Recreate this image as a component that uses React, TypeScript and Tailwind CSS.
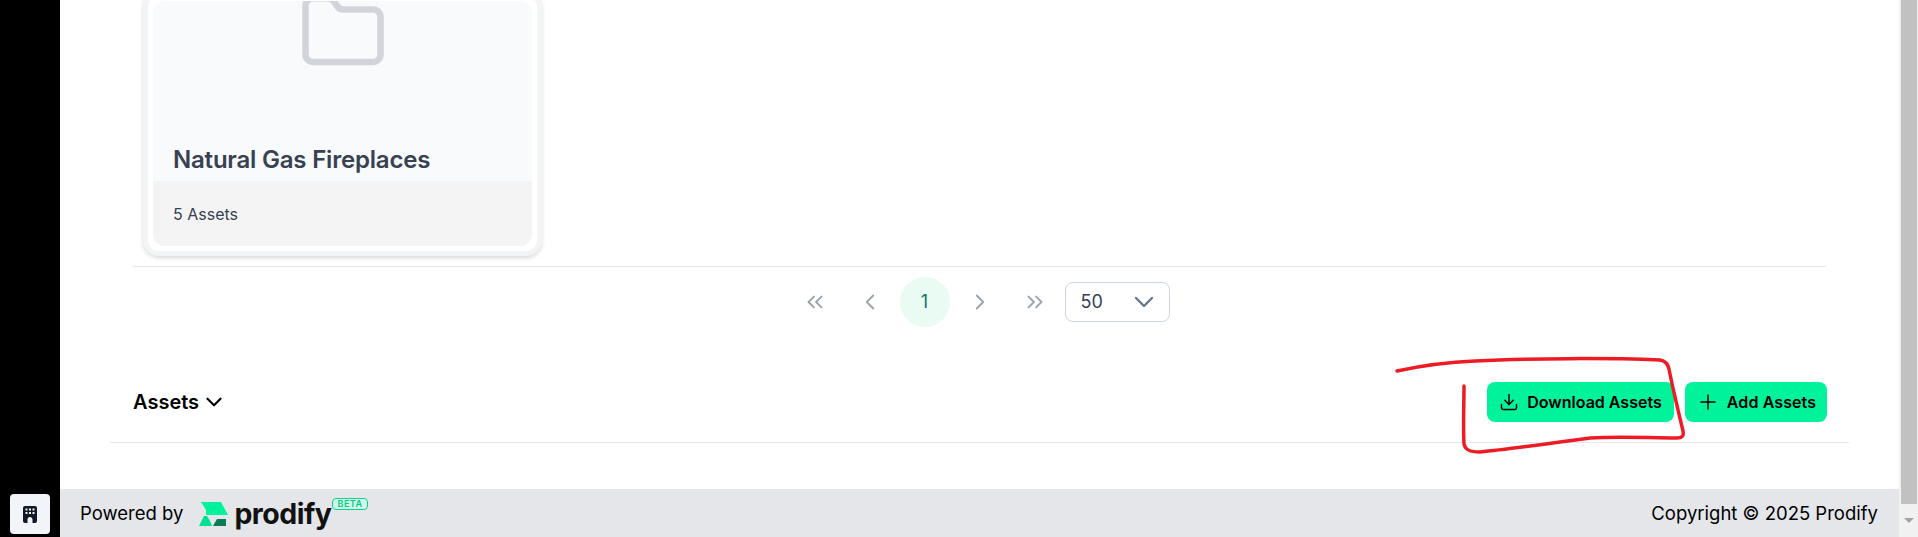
import { ChevronDown, ChevronLeft, ChevronRight, ChevronsLeft, ChevronsRight, Download, Folder, Plus } from "lucide-react";

function PageIcon({ children }: { children: React.ReactNode }) {
  return <div className="flex h-[50px] w-[50px] items-center justify-center text-[#9ca3af]">{children}</div>;
}

function Logo() {
  return (
    <svg width="29" height="24" viewBox="0 0 29 24" className="shrink-0">
      <path d="M2 0H22L29 13H7V8Z" fill="#00f29b" />
      <path d="M5 14H8L11 19L13 24H0Z" fill="#00e093" />
      <path d="M14 24L18 17H27V24Z" fill="#0b7a55" />
    </svg>
  );
}

function BuildingIcon() {
  return (
    <svg width="14" height="17" viewBox="0 0 14 17">
      <path d="M2 0H12A2 2 0 0 1 14 2V15A2 2 0 0 1 12 17H9.5V13.5A2.5 2.5 0 0 0 4.5 13.5V17H2A2 2 0 0 1 0 15V2A2 2 0 0 1 2 0Z" fill="#111827" />
      <g fill="#f1f4f9">
        <rect x="2.5" y="2.5" width="2" height="2" />
        <rect x="6" y="2.5" width="2" height="2" />
        <rect x="9.5" y="2.5" width="2" height="2" />
        <rect x="2.5" y="6" width="2" height="2" />
        <rect x="6" y="6" width="2" height="2" />
        <rect x="9.5" y="6" width="2" height="2" />
      </g>
    </svg>
  );
}

export default function App() {
  return (
    <div className="relative flex h-[537px] w-full overflow-hidden bg-white font-['Inter',sans-serif]">
      {/* sidebar */}
      <aside className="flex w-[60px] shrink-0 flex-col justify-end bg-black px-[10px] pb-[3px]">
        <button className="flex h-10 w-10 items-center justify-center rounded bg-[#f1f4f9]">
          <BuildingIcon />
        </button>
      </aside>

      <div className="flex min-w-0 flex-1 flex-col">
        <main className="flex min-h-0 flex-1 flex-col justify-end overflow-hidden px-[50px] pb-[46px]">
          <div className="mx-[23px]">
            {/* folder card */}
            <div className="ml-[10px] w-[399px] rounded-2xl border-[5px] border-[#f3f4f6] bg-white p-[5px] shadow-[0_2px_4px_rgba(0,0,0,0.15)]">
              <div className="overflow-hidden rounded-xl bg-[#f9fafb]">
                <div className="flex h-[180px] flex-col justify-end px-5">
                  <div className="flex justify-center pb-[69px]">
                    <Folder size={90} strokeWidth={1.75} className="text-[#d1d5db]" />
                  </div>
                  <h2 className="pb-[7px] text-[24px] font-semibold leading-[28px] tracking-[-0.2px] text-[#374151]">Natural Gas Fireplaces</h2>
                </div>
                <div className="flex h-[65px] items-center bg-[#f4f4f5] px-5 text-[16px] text-[#374151]">5 Assets</div>
              </div>
            </div>

            {/* pagination */}
            <div className="mt-[10px] flex h-[61px] items-end justify-center gap-[5px] border-t border-[#e2e8f0]">
              <PageIcon><ChevronsLeft size={26} strokeWidth={1.75} /></PageIcon>
              <PageIcon><ChevronLeft size={26} strokeWidth={1.75} /></PageIcon>
              <div className="flex h-[50px] w-[50px] items-center justify-center rounded-full bg-[#e9fbf3] text-lg text-[#0f766e]">1</div>
              <PageIcon><ChevronRight size={26} strokeWidth={1.75} /></PageIcon>
              <PageIcon><ChevronsRight size={26} strokeWidth={1.75} /></PageIcon>
              <div className="mb-[5px] flex h-10 w-[105px] items-center justify-between rounded-lg border border-[#cbd5e1] bg-white pl-[15px] pr-[9px] text-lg text-[#334155]">
                50
                <ChevronDown size={32} strokeWidth={1.75} className="text-[#64748b]" />
              </div>
            </div>
          </div>

          {/* assets section header */}
          <div className="mt-[55px] flex h-[61px] items-start justify-between border-b border-[#e2e8f0] pb-5 pl-[23px] pr-[22px]">
            <button className="flex h-10 items-center gap-[2px] text-[20px] font-semibold text-black">
              Assets <ChevronDown size={26} strokeWidth={2} />
            </button>
            <div className="flex gap-[11px]">
              <button className="flex h-10 w-[187px] items-center justify-center gap-[8px] rounded-lg bg-[#00f29b] text-[16px] font-semibold text-black">
                <Download size={20} strokeWidth={1.75} /> Download Assets
              </button>
              <button className="flex h-10 w-[142px] items-center justify-center gap-[7px] rounded-lg bg-[#00f29b] text-[16px] font-semibold tracking-[0.1px] text-black">
                <Plus size={24} strokeWidth={1.5} /> Add Assets
              </button>
            </div>
          </div>
        </main>

        {/* footer */}
        <footer className="flex h-12 shrink-0 items-center justify-between bg-[#e4e6ea] pl-5 pr-[21px] pt-[2px] text-[18.5px] text-black">
          <div className="flex items-center">
            <span>Powered by</span>
            <span className="ml-4 flex items-center gap-[6px]">
              <Logo />
              <span className="text-[28.5px] font-bold leading-none tracking-[-0.5px] text-[#111]">prodify</span>
              <span className="mb-5 ml-[-5px] rounded-sm border border-[#00d98b] bg-[#d3f8ea] px-1 text-[9px] font-semibold leading-[10px] tracking-[0.5px] text-[#00c985]">BETA</span>
            </span>
          </div>
          <span>Copyright © 2025 Prodify</span>
        </footer>
      </div>

      {/* scrollbar */}
      <div className="flex w-[19px] shrink-0 flex-col bg-[#f1f1f1] pl-[2px] pr-[1px]">
        <div className="h-[504px] bg-[#c1c1c1]" />
        <div className="flex flex-1 items-center justify-center">
          <div className="h-0 w-0 border-x-[5px] border-t-[5px] border-x-transparent border-t-[#a3a3a3]" />
        </div>
      </div>

      {/* red marker annotation over the page */}
      <svg className="pointer-events-none absolute left-0 top-0" width="1918" height="537" fill="none">
        <path
          d="M1397 371C1420 366 1450 362 1475 361C1530 358 1610 358 1660 360C1666 361 1668 364 1669 369C1672 385 1678 410 1683 431C1684 436 1682 438 1677 438C1650 438 1620 436 1590 438C1560 442 1510 449 1480 452C1470 452 1465 450 1464 444C1463 425 1464 405 1464 386"
          stroke="#ed1c24"
          strokeWidth="3.5"
          strokeLinecap="round"
        />
      </svg>
    </div>
  );
}
